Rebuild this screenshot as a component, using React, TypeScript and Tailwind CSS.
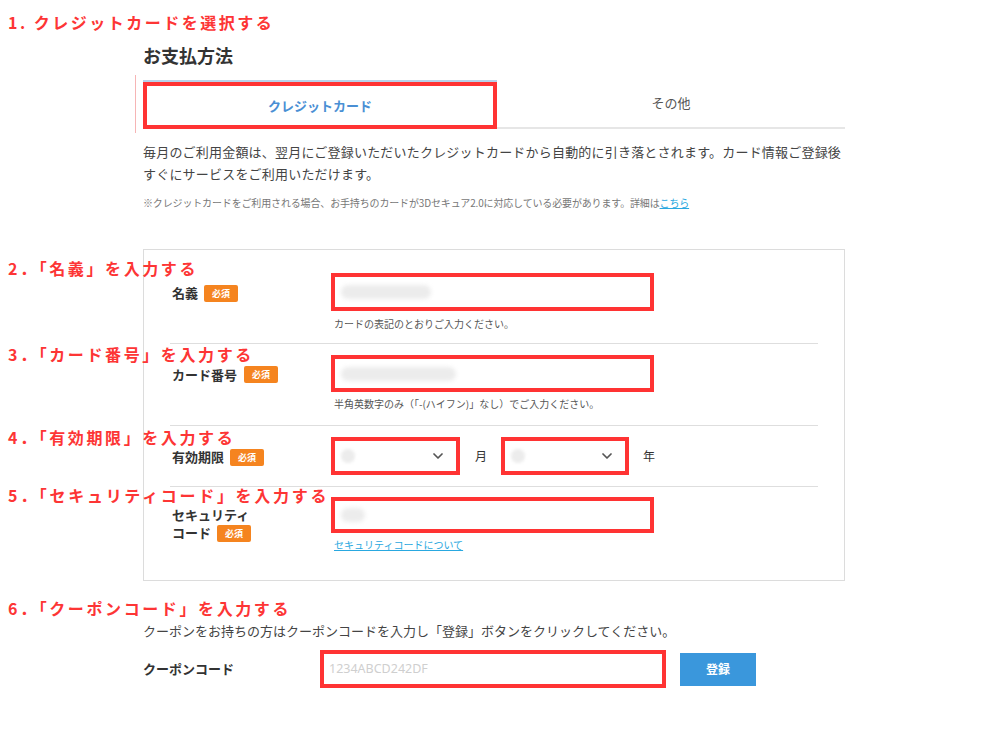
import React from "react";

const Badge = () => (
  <span className="inline-flex h-[17px] items-center rounded-[2px] bg-[#f5841f] px-[8px] text-[9px] font-bold leading-none text-white">
    必須
  </span>
);

const Blur = ({ w }: { w: number }) => (
  <div className="h-[14px] rounded-full bg-[#ececec] blur-[2px]" style={{ width: w }} />
);

const Chevron = () => (
  <svg width="10" height="6" viewBox="0 0 10 6" fill="none">
    <path d="M1 1l4 4 4-4" stroke="#555" strokeWidth="1.7" strokeLinecap="round" strokeLinejoin="round" />
  </svg>
);

const Note = ({ className, children }: { className: string; children: React.ReactNode }) => (
  <div
    className={`absolute left-[8px] whitespace-nowrap text-[16px] font-bold leading-[20px] text-[#fd3535] ${className}`}
  >
    {children}
  </div>
);

export default function App() {
  return (
    <div className="relative h-[750px] w-[1000px] overflow-hidden bg-white font-['Noto_Sans_CJK_JP','Noto_Sans',sans-serif] text-[#333]">
      <div className="w-[845px] pl-[143px] pt-[42px]">
        <h1 className="text-[18px] font-bold leading-[26px] text-[#333]">お支払方法</h1>

        {/* tabs */}
        <div className="relative mt-[12px] flex">
          <div className="absolute left-[-8px] top-[-5px] h-[58px] w-px bg-[#f6b5b5]" />
          <div className="w-[354px] border-t-2 border-[#b8d2ea]">
            <div className="flex h-[47px] items-center justify-center border-4 border-[#ff3333] text-[13px] font-bold text-[#4a8fd4]">
              クレジットカード
            </div>
          </div>
          <div className="flex h-[49px] flex-1 items-center justify-center border-b-2 border-[#e6e6e6] pb-[2px] text-[13px] text-[#555]">
            その他
          </div>
        </div>

        <p className="mt-[12px] text-[13px] leading-[22px] tracking-[0.2px] text-[#444]">
          毎月のご利用金額は、翌月にご登録いただいたクレジットカードから自動的に引き落とされます。カード情報ご登録後
          <br />
          すぐにサービスをご利用いただけます。
        </p>
        <p className="mt-[10px] text-[10px] leading-[16px] tracking-[-0.15px] text-[#777]">
          ※クレジットカードをご利用される場合、お手持ちのカードが3Dセキュア2.0に対応している必要があります。詳細は
          <span className="text-[#29a8e0] underline">こちら</span>
        </p>

        {/* form box */}
        <div className="mt-[38px] border border-[#dcdcdc] px-[26px]">
          {/* row 1 */}
          <div className="flex border-b border-[#dedede] pb-[12px] pt-[23px]">
            <div className="flex h-[38px] w-[161px] items-center gap-[6px] pl-[2px] pt-[2px]">
              <span className="text-[13px] font-bold">名義</span>
              <Badge />
            </div>
            <div>
              <div className="flex h-[38px] w-[323px] items-center border-4 border-[#ff3333] pl-[6px]">
                <Blur w={90} />
              </div>
              <div className="mt-[6px] pl-[3px] text-[10px] leading-[14px] text-[#555]">カードの表記のとおりご入力ください。</div>
            </div>
          </div>
          {/* row 2 */}
          <div className="flex border-b border-[#dedede] pb-[14px] pt-[11px]">
            <div className="flex h-[37px] w-[161px] items-center gap-[7px] pl-[2px] pt-[2px]">
              <span className="text-[13px] font-bold">カード番号</span>
              <Badge />
            </div>
            <div>
              <div className="flex h-[37px] w-[323px] items-center border-4 border-[#ff3333] pl-[6px]">
                <Blur w={115} />
              </div>
              <div className="mt-[5px] pl-[3px] text-[10px] leading-[14px] text-[#555]">
                半角英数字のみ（「-(ハイフン)」なし）でご入力ください。
              </div>
            </div>
          </div>
          {/* row 3 */}
          <div className="flex border-b border-[#dedede] pb-[11px] pt-[11px]">
            <div className="flex h-[38px] w-[161px] items-center gap-[6px] pl-[2px] pt-[2px]">
              <span className="text-[13px] font-bold">有効期限</span>
              <Badge />
            </div>
            <div className="flex h-[38px] items-center">
              <div className="flex h-[38px] w-[129px] items-center justify-between border-4 border-[#ff3333] pl-[6px] pr-[13px]">
                <div className="h-[14px] w-[14px] rounded-full bg-[#ececec] blur-[1.5px]" />
                <Chevron />
              </div>
              <span className="ml-[15px] mr-[14px] text-[12px]">月</span>
              <div className="flex h-[38px] w-[128px] items-center justify-between border-4 border-[#ff3333] pl-[6px] pr-[13px]">
                <div className="h-[14px] w-[14px] rounded-full bg-[#ececec] blur-[1.5px]" />
                <Chevron />
              </div>
              <span className="ml-[14px] text-[12px]">年</span>
            </div>
          </div>
          {/* row 4 */}
          <div className="flex pb-[28px] pt-[10px]">
            <div className="w-[161px] pl-[2px] pt-[9px] text-[13px] font-bold leading-[18px]">
              <div>セキュリティ</div>
              <div className="flex items-center gap-[6px]">
                <span>コード</span>
                <Badge />
              </div>
            </div>
            <div>
              <div className="flex h-[36px] w-[323px] items-center border-4 border-[#ff3333] pl-[6px]">
                <Blur w={24} />
              </div>
              <div className="mt-[5px] pl-[3px] text-[10px] leading-[14px] text-[#29a8e0] underline">
                セキュリティコードについて
              </div>
            </div>
          </div>
        </div>

        {/* coupon */}
        <p className="mt-[41px] text-[13px] leading-[18px] text-[#444]">
          クーポンをお持ちの方はクーポンコードを入力し「登録」ボタンをクリックしてください。
        </p>
        <div className="mt-[10px] flex items-center">
          <div className="w-[177px] text-[13px] font-bold">クーポンコード</div>
          <div className="flex h-[38px] w-[346px] items-center border-4 border-[#ff3333] pl-[5px] font-['Noto_Sans',sans-serif] text-[12.5px] text-[#cfcfcf]">
            1234ABCD242DF
          </div>
          <button className="ml-[14px] flex h-[33px] w-[76px] items-center justify-center bg-[#3a97dc] text-[12px] font-bold text-white">
            登録
          </button>
        </div>
      </div>

      {/* annotations */}
      <Note className="top-[12px] tracking-[2.5px]">1. クレジットカードを選択する</Note>
      <Note className="top-[258px] tracking-[2.6px]">2．「名義」を入力する</Note>
      <Note className="top-[344px] tracking-[2.6px]">3．「カード番号」を入力する</Note>
      <Note className="top-[427px] tracking-[2.6px]">4．「有効期限」を入力する</Note>
      <Note className="top-[485px] tracking-[2.7px]">5．「セキュリティコード」を入力する</Note>
      <Note className="top-[598px] tracking-[2.6px]">6．「クーポンコード」を入力する</Note>
    </div>
  );
}
